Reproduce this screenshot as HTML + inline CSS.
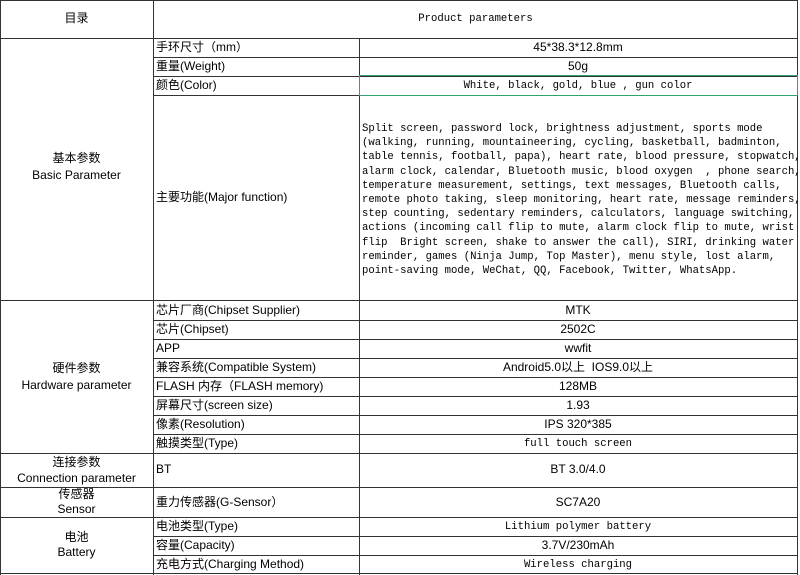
<!DOCTYPE html>
<html><head><meta charset="utf-8"><style>
body{margin:0;width:800px;height:575px;background:#fff;position:relative;overflow:hidden;font-family:"Liberation Sans","Noto Sans CJK SC",sans-serif;font-size:12px;color:#000}
.h{position:absolute;height:1px;background:#333}
.v{position:absolute;width:1px;background:#333}
.t{position:absolute;white-space:nowrap;line-height:19px}
.c{text-align:center}
.m{font-family:"Liberation Mono","Noto Serif CJK SC",monospace;font-size:10.6px}
</style></head><body>
<div class="h" style="left:0;top:0;width:798px"></div>
<div class="h" style="left:0;top:38px;width:798px"></div>
<div class="h" style="left:153px;top:57px;width:645px"></div>
<div class="h" style="left:153px;top:76px;width:645px"></div>
<div class="h" style="left:153px;top:95px;width:645px"></div>
<div class="h" style="left:0;top:300px;width:798px"></div>
<div class="h" style="left:153px;top:320px;width:645px"></div>
<div class="h" style="left:153px;top:339px;width:645px"></div>
<div class="h" style="left:153px;top:358px;width:645px"></div>
<div class="h" style="left:153px;top:377px;width:645px"></div>
<div class="h" style="left:153px;top:396px;width:645px"></div>
<div class="h" style="left:153px;top:415px;width:645px"></div>
<div class="h" style="left:153px;top:434px;width:645px"></div>
<div class="h" style="left:0;top:453px;width:798px"></div>
<div class="h" style="left:0;top:487px;width:798px"></div>
<div class="h" style="left:0;top:517px;width:798px"></div>
<div class="h" style="left:153px;top:536px;width:645px"></div>
<div class="h" style="left:153px;top:555px;width:645px"></div>
<div class="h" style="left:0;top:573px;width:798px"></div>
<div class="v" style="left:0;top:0;height:575px"></div>
<div class="v" style="left:153px;top:0;height:575px"></div>
<div class="v" style="left:359px;top:38px;height:537px"></div>
<div class="v" style="left:797px;top:0;height:575px"></div>
<div style="position:absolute;left:359px;top:75px;width:437px;height:19px;border:1px solid #2fa36f"></div>

<div class="t c" style="left:0;width:153px;top:9px">目录</div>
<div class="t c m" style="left:153px;width:645px;top:10px">Product parameters</div>

<div class="t" style="left:156px;top:38px">手环尺寸（mm）</div>
<div class="t c" style="left:359px;width:438px;top:38px">45*38.3*12.8mm</div>
<div class="t" style="left:156px;top:57px">重量(Weight)</div>
<div class="t c" style="left:359px;width:438px;top:57px">50g</div>
<div class="t" style="left:156px;top:76px">颜色(Color)</div>
<div class="t c m" style="left:359px;width:438px;top:77px">White, black, gold, blue , gun color</div>
<div class="t c" style="left:0;width:153px;top:150px;line-height:17px">基本参数<br>Basic Parameter</div>
<div class="t" style="left:156px;top:188px">主要功能(Major function)</div>
<div class="t m" style="left:362px;top:122px;line-height:14.2px;white-space:pre">Split screen, password lock, brightness adjustment, sports mode
(walking, running, mountaineering, cycling, basketball, badminton,
table tennis, football, papa), heart rate, blood pressure, stopwatch,
alarm clock, calendar, Bluetooth music, blood oxygen  , phone search,
temperature measurement, settings, text messages, Bluetooth calls,
remote photo taking, sleep monitoring, heart rate, message reminders,
step counting, sedentary reminders, calculators, language switching,
actions (incoming call flip to mute, alarm clock flip to mute, wrist
flip  Bright screen, shake to answer the call), SIRI, drinking water
reminder, games (Ninja Jump, Top Master), menu style, lost alarm,
point-saving mode, WeChat, QQ, Facebook, Twitter, WhatsApp.</div>

<div class="t c" style="left:0;width:153px;top:360px;line-height:17px">硬件参数<br>Hardware parameter</div>
<div class="t" style="left:156px;top:301px">芯片厂商(Chipset Supplier)</div>
<div class="t c" style="left:359px;width:438px;top:301px">MTK</div>
<div class="t" style="left:156px;top:320px">芯片(Chipset)</div>
<div class="t c" style="left:359px;width:438px;top:320px">2502C</div>
<div class="t" style="left:156px;top:339px">APP</div>
<div class="t c" style="left:359px;width:438px;top:339px">wwfit</div>
<div class="t" style="left:156px;top:358px">兼容系统(Compatible System)</div>
<div class="t c" style="left:359px;width:438px;top:358px">Android5.0以上&nbsp; IOS9.0以上</div>
<div class="t" style="left:156px;top:377px">FLASH 内存（FLASH memory)</div>
<div class="t c" style="left:359px;width:438px;top:377px">128MB</div>
<div class="t" style="left:156px;top:396px">屏幕尺寸(screen size)</div>
<div class="t c" style="left:359px;width:438px;top:396px">1.93</div>
<div class="t" style="left:156px;top:415px">像素(Resolution)</div>
<div class="t c" style="left:359px;width:438px;top:415px">IPS 320*385</div>
<div class="t" style="left:156px;top:434px">触摸类型(Type)</div>
<div class="t c m" style="left:359px;width:438px;top:435px">full touch screen</div>

<div class="t c" style="left:0;width:153px;top:454px;line-height:16px">连接参数<br>Connection parameter</div>
<div class="t" style="left:156px;top:460px">BT</div>
<div class="t c" style="left:359px;width:438px;top:460px">BT 3.0/4.0</div>
<div class="t c" style="left:0;width:153px;top:487px;line-height:15px">传感器<br>Sensor</div>
<div class="t" style="left:156px;top:493px">重力传感器(G-Sensor）</div>
<div class="t c" style="left:359px;width:438px;top:493px">SC7A20</div>
<div class="t c" style="left:0;width:153px;top:530px;line-height:15px">电池<br>Battery</div>
<div class="t" style="left:156px;top:517px">电池类型(Type)</div>
<div class="t c m" style="left:359px;width:438px;top:518px">Lithium polymer battery</div>
<div class="t" style="left:156px;top:536px">容量(Capacity)</div>
<div class="t c" style="left:359px;width:438px;top:536px">3.7V/230mAh</div>
<div class="t" style="left:156px;top:555px">充电方式(Charging Method)</div>
<div class="t c m" style="left:359px;width:438px;top:556px">Wireless charging</div>
</body></html>
